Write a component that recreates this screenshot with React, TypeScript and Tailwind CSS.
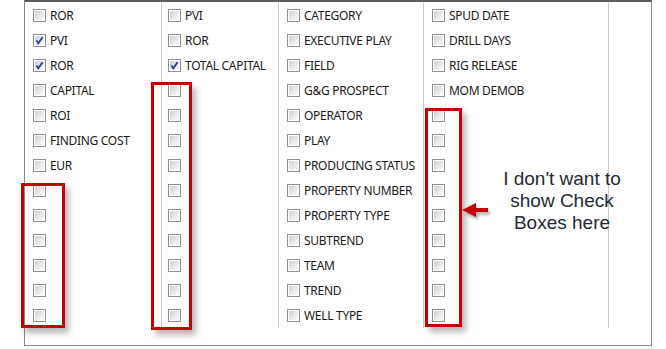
import React from "react";

type Item = { label?: string; checked?: boolean };

const blanks = (n: number): Item[] => Array.from({ length: n }, () => ({}));

const columns: { width: string; pad: string; items: Item[] }[] = [
  {
    width: "w-[137px]",
    pad: "pl-[8px]",
    items: [
      { label: "ROR" },
      { label: "PVI", checked: true },
      { label: "ROR", checked: true },
      { label: "CAPITAL" },
      { label: "ROI" },
      { label: "FINDING COST" },
      { label: "EUR" },
      ...blanks(6),
    ],
  },
  {
    width: "w-[117px]",
    pad: "pl-[6px]",
    items: [
      { label: "PVI" },
      { label: "ROR" },
      { label: "TOTAL CAPITAL", checked: true },
      ...blanks(10),
    ],
  },
  {
    width: "w-[145px]",
    pad: "pl-[8px]",
    items: [
      { label: "CATEGORY" },
      { label: "EXECUTIVE PLAY" },
      { label: "FIELD" },
      { label: "G&G PROSPECT" },
      { label: "OPERATOR" },
      { label: "PLAY" },
      { label: "PRODUCING STATUS" },
      { label: "PROPERTY NUMBER" },
      { label: "PROPERTY TYPE" },
      { label: "SUBTREND" },
      { label: "TEAM" },
      { label: "TREND" },
      { label: "WELL TYPE" },
    ],
  },
  {
    width: "w-[185px]",
    pad: "pl-[8px]",
    items: [
      { label: "SPUD DATE" },
      { label: "DRILL DAYS" },
      { label: "RIG RELEASE" },
      { label: "MOM DEMOB" },
      ...blanks(9),
    ],
  },
];

function Box({ checked }: { checked?: boolean }) {
  return (
    <span className="relative shrink-0 w-[13px] h-[13px] border border-[#8e8f8f] bg-white p-[1px]">
      <span className="block w-full h-full bg-gradient-to-br from-[#cdd0d5] via-[#e6e7e9] to-[#fbfbfb]" />
      {checked && (
        <svg className="absolute left-0 top-0" width="11" height="11" viewBox="0 0 11 11">
          <path d="M2.5 5.5 L4.3 8.3 L8.6 2.2" fill="none" stroke="#2a3d9e" strokeWidth="1.8" />
        </svg>
      )}
    </span>
  );
}

function RedBox({ cls }: { cls: string }) {
  return (
    <div
      className={`absolute border-[3px] border-[#c40000] shadow-[4px_5px_6px_rgba(0,0,0,0.28)] ${cls}`}
    />
  );
}

export default function App() {
  return (
    <div className="relative w-[666px] h-[349px] bg-white overflow-hidden font-['Noto_Sans','Open_Sans',sans-serif]">
      <div className="ml-[24px] w-[628px] h-[346px] border-x border-b border-x-[#8a8a8a] border-b-[#8a8a8a] border-t-2 border-t-[#5c5c5c] flex">
        {columns.map((col, ci) => (
          <div
            key={ci}
            className={`${col.width} h-[326px] pt-[1px] border-r border-[#cacaca] flex flex-col ${col.pad}`}
          >
            {col.items.map((it, i) => (
              <div key={i} className="h-[25px] flex items-center gap-[4px]">
                <Box checked={it.checked} />
                {it.label && (
                  <span className="text-[12px] leading-none text-[#1a1a1a] whitespace-nowrap tracking-[-0.3px]">
                    {it.label}
                  </span>
                )}
              </div>
            ))}
          </div>
        ))}
      </div>

      <RedBox cls="left-[21px] top-[183px] w-[44px] h-[145px]" />
      <RedBox cls="left-[151px] top-[82px] w-[41px] h-[248px]" />
      <RedBox cls="left-[425px] top-[108px] w-[37px] h-[219px]" />

      <svg className="absolute left-[460px] top-[200px]" width="34" height="22" viewBox="0 0 34 22">
        <defs>
          <filter id="sh" x="-30%" y="-30%" width="160%" height="180%">
            <feDropShadow dx="2" dy="3" stdDeviation="1.6" floodColor="#000" floodOpacity="0.3" />
          </filter>
        </defs>
        <path d="M2 10 L16 3 L16 8 L28 8 L28 12 L16 12 L16 17 Z" fill="#c40000" filter="url(#sh)" />
      </svg>

      <div className="absolute left-[486px] top-[168px] w-[152px] text-center text-[19px] leading-[22px] text-[#1f2a36] font-['Liberation_Sans',Arial,sans-serif]">
        I don't want to
        <br />
        show Check
        <br />
        Boxes here
      </div>
    </div>
  );
}
